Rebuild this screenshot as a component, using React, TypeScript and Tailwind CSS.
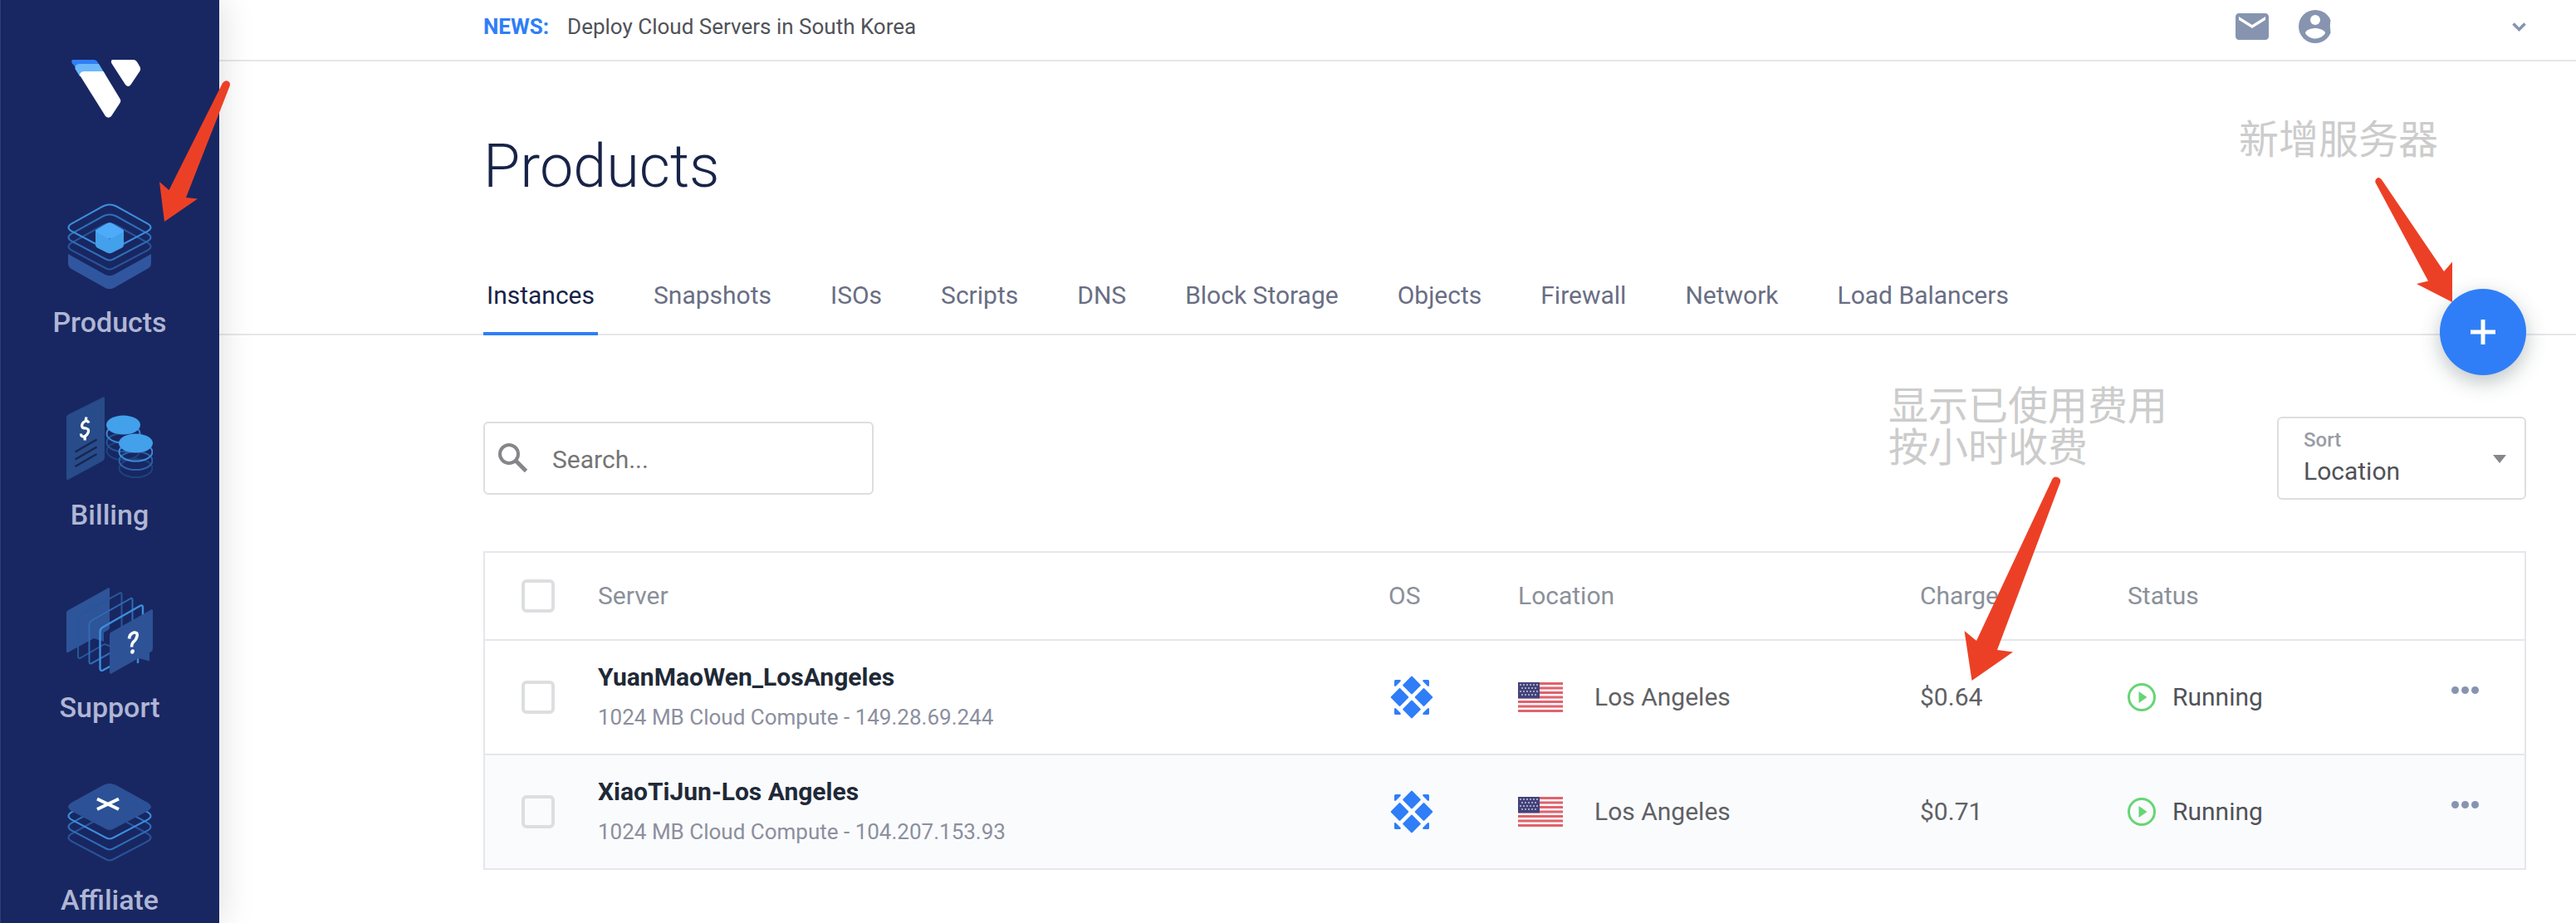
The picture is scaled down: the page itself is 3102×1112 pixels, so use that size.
import { type ReactNode } from "react";
import { MdEmail } from "react-icons/md";

const LAYER =
  "M44 4.5Q52 .5 60 4.5L98 25.5Q105 30 98 34.5L56 56.5Q52 58.5 48 56.5L6 34.5Q-1 30 6 25.5Z";

function Logo() {
  return (
    <svg viewBox="0 0 84 70" className="h-[70px] w-[84px]" role="img" aria-label="Vultr">
      <path d="M1 0H27Q29.500 0 31 2L40 17H12L1 4.500Q-.5 1.500 1 0Z" fill="#2f7ef7" />
      <path d="M9 5H33L42 20H10L4.500 11Q3.500 6 9 5Z" fill="#6cb8fb" />
      <path d="M15 14H38.500L58.500 47Q60 49.500 58.500 52L48 68Q44.500 71.500 41 68L10 18.500Q10 14.500 15 14Z" fill="#fff" />
      <path d="M49 0H75Q77.500 0 79 2.500L82.500 8.500Q84 11 82.500 13.500L71.500 30Q68.500 34 65 30L48.500 4.500Q47 1.500 49 0Z" fill="#fff" />
    </svg>
  );
}

function ProductsIcon() {
  return (
    <svg viewBox="0 0 104 104" className="size-[104px]" fill="none" strokeWidth="2" aria-hidden="true">
      <path d="M2 62L46 86.500Q52 90 58 86.500L102 62V73Q102 77 98 79.500L57 103Q52 105.500 47 103L6 80Q2 77.500 2 73Z" fill="#3056a0" />
      <path d={LAYER} transform="translate(0 23)" stroke="#29549a" />
      <path d={LAYER} transform="translate(0 12)" stroke="#2f6fb8" />
      <path d={LAYER} stroke="#3d8fdc" />
      <path d="M35 33L52 44L69 33V51Q69 53.500 67 54.500L55 60.500Q52 62 49 60.500L37 54.500Q35 53.500 35 51Z" fill="#43a0eb" />
      <path d="M37 32L48 25.500Q52 23 56 25.500L67 32Q70.500 34 67 36L56 42.500Q52 44.500 48 42.500L37 36Q33.500 34 37 32Z" fill="#4eabf9" />
    </svg>
  );
}

function BillingIcon() {
  return (
    <svg viewBox="0 0 104 104" className="size-[104px]" fill="none" strokeWidth="2" aria-hidden="true">
      <path d="M0 27Q0 25 2 23.500L44 2.500Q46 1.500 46 4V75Q46 78 43.500 79.500L2 102Q0 102.500 0 100Z" fill="#284b89" />
      <path d="M10.500 68.500L36.500 53.500M10.500 77.500L36.500 62.500M10.500 86L36.500 71" stroke="#152650" strokeWidth="2.200" />
      <path d="M27 33.500Q25.500 29.500 21.500 32Q17.500 35 19 38.500Q20 40 23.500 40Q27 40.500 26.500 44Q25 49 21 50Q17.500 50.500 17.500 46.500M24 26.500L23 31M22.500 50L22 54.500" stroke="#fff" strokeWidth="3.200" />
      <ellipse cx="68.500" cy="67" rx="20" ry="11" stroke="#1f427f" />
      <ellipse cx="68.500" cy="57" rx="20" ry="11" stroke="#255596" />
      <ellipse cx="68.500" cy="46.500" rx="20" ry="11" stroke="#3a86cf" />
      <ellipse cx="68.500" cy="36" rx="20.500" ry="11.500" fill="#43a0eb" />
      <ellipse cx="83.500" cy="88" rx="20" ry="11" stroke="#1f427f" />
      <ellipse cx="83.500" cy="79" rx="20" ry="11" stroke="#2b63a9" />
      <ellipse cx="83.500" cy="68.500" rx="20" ry="11" stroke="#3d8fdc" />
      <ellipse cx="83.500" cy="58" rx="20.500" ry="11.500" fill="#43a0eb" />
    </svg>
  );
}

function SupportIcon() {
  return (
    <svg viewBox="0 0 104 104" className="size-[104px]" fill="none" strokeWidth="2" aria-hidden="true">
      <path d="M0 30Q0 28.500 1.500 27.500L50 .5Q52 -.5 52 1.500V48Q52 50 50 51L45 54V65L33 61L2 78Q0 78.500 0 77Z" fill="#2e5499" />
      <path d="M66.500 56V8Q66.500 5 63.500 7L17 32.500Q14 34.500 14 38V83Q14 86 17 84.500L46 68L54 71" stroke="#28569a" />
      <path d="M79.500 40V15Q79.500 11.500 76.500 13.500L30.500 39.500Q27.500 41.500 27.500 45V89Q27.500 92.500 30.500 91L54 78" stroke="#2f6bb3" />
      <path d="M92 34V24Q92 20 88.500 22L44 47.500Q40.500 49.500 40.500 53V97Q40.500 101 44 99.500L54 94M86 91V84" stroke="#3d8fdc" strokeWidth="2.400" />
      <path d="M52 57Q52 54.500 54 53.500L102 26.500Q104 25.500 104 27.500V73Q104 76 102 77L100 78.500V88.500L87 85L54 103.500Q52 104.500 52 102Z" fill="#2e5296" />
      <path d="M75.500 61.500Q76 55.500 81.500 54Q86 53.500 85 58.500Q84 63 80.500 65.500Q78.500 67.500 78.500 71.500" stroke="#fff" strokeWidth="3.600" />
      <ellipse cx="79.500" cy="77" rx="2.300" ry="2.800" transform="rotate(25 79.500 77)" fill="#fff" />
    </svg>
  );
}

function AffiliateIcon() {
  return (
    <svg viewBox="0 0 104 104" className="size-[104px]" fill="none" strokeWidth="2" aria-hidden="true">
      <path d={LAYER} transform="translate(0 39)" stroke="#29549a" />
      <path d={LAYER} transform="translate(0 26)" stroke="#2f6fb8" />
      <path d={LAYER} transform="translate(0 13)" stroke="#3d8fdc" />
      <path d={LAYER} transform="translate(0 2)" stroke="#2c5196" strokeWidth="1" fill="#2c5196" />
      <path d="M37 22.500L63 35M37 35L63 22.500" stroke="#fff" strokeWidth="4" />
    </svg>
  );
}

function OsIcon() {
  return (
    <svg viewBox="0 0 52 52" className="size-[52px]" fill="#2f7ef7" role="img" aria-label="CentOS">
      {[[26, 11.5], [11.5, 26], [40.5, 26], [26, 40.5]].map(([x, y]) => (
        <rect key={`${x}-${y}`} x={x - 8} y={y - 8} width="16" height="16" rx="1.200" transform={`rotate(45 ${x} ${y})`} />
      ))}
      {[0, 90, 180, 270].map((angle) => (
        <path key={angle} d="M6.500 5H12Q13.500 5.500 12.500 7L7 12.500Q5.500 13.500 5 12V6.500Q5 5 6.500 5Z" transform={`rotate(${angle} 26 26)`} />
      ))}
    </svg>
  );
}

function UsFlag() {
  return (
    <svg viewBox="0 0 54 36" className="h-9 w-[54px] shrink-0" role="img" aria-label="United States">
      <rect width="54" height="36" fill="#f8f8fe" />
      {[0, 1, 2, 3, 4, 5, 6].map((i) => (
        <rect key={i} y={i * 5.5} width="54" height="3" fill="#e0626b" />
      ))}
      <rect width="26" height="19.400" fill="#42427a" />
      {[0, 1, 2, 3].map((row) =>
        Array.from({ length: row % 2 ? 5 : 6 }, (_, col) => (
          <rect key={`${row}-${col}`} x={2 + col * 4 + (row % 2) * 2} y={2 + row * 4} width="2" height="2" fill="#a5a5c0" />
        )),
      )}
    </svg>
  );
}

const navItems: { label: string; icon: ReactNode }[] = [
  { label: "Products", icon: <ProductsIcon /> },
  { label: "Billing", icon: <BillingIcon /> },
  { label: "Support", icon: <SupportIcon /> },
  { label: "Affiliate", icon: <AffiliateIcon /> },
];

const tabs = ["Instances", "Snapshots", "ISOs", "Scripts", "DNS", "Block Storage", "Objects", "Firewall", "Network", "Load Balancers"];

const servers = [
  { name: "YuanMaoWen_LosAngeles", ip: "149.28.69.244", charge: "$0.64" },
  { name: "XiaoTiJun-Los Angeles", ip: "104.207.153.93", charge: "$0.71" },
];

function Checkbox({ label }: { label: string }) {
  return (
    <input
      type="checkbox"
      aria-label={label}
      className="block size-10 appearance-none rounded-md border-4 border-[#dddee0] checked:bg-[#2f7ef7]"
    />
  );
}

function Sidebar() {
  return (
    <aside className="relative z-10 flex w-[264px] shrink-0 flex-col items-center bg-[#182762] pt-[72px] shadow-[inset_1px_0_0_#2f3d73,0_0_40px_rgba(0,0,0,0.15)]">
      <a href="#home" className="mr-2">
        <Logo />
      </a>
      <nav className="mt-[102px] flex flex-col gap-[68px]">
        {navItems.map((item) => (
          <a key={item.label} href={`#${item.label.toLowerCase()}`} className="flex flex-col items-center gap-5">
            {item.icon}
            <span className="text-[34px] leading-10 font-medium text-[#b0b6d4]">{item.label}</span>
          </a>
        ))}
      </nav>
    </aside>
  );
}

function TopBar() {
  return (
    <header className="flex h-[74px] items-center justify-between border-b-2 border-[#e6e6eb] pr-[60px] pb-2 pl-[318px]">
      <p className="flex gap-[22px] text-[26px] leading-10">
        <strong className="font-bold text-[#2f7ef7]">NEWS:</strong>
        <a href="#news" className="text-[#505259]">Deploy Cloud Servers in South Korea</a>
      </p>
      <div className="flex items-center text-[#8794b0]">
        <button type="button" aria-label="Messages">
          <MdEmail size={48} />
        </button>
        <button type="button" aria-label="Account" className="ml-7 flex items-center">
          <svg viewBox="0 0 48 48" className="size-12" aria-hidden="true">
            <circle cx="24" cy="24" r="20" fill="currentColor" />
            <circle cx="24" cy="16" r="6" fill="#fff" />
            <path d="M12 32C12 28 20 26 24 26S36 28 36 32C33.500 36 29 38.500 24 38.500S14.500 36 12 32Z" fill="#fff" />
            <path d="M48 12L42.500 16Q41 23 42.500 31L48 36Z" fill="#fff" />
          </svg>
          <svg viewBox="0 0 18 12" className="ml-[212px] h-3 w-[18px]" fill="none" stroke="currentColor" strokeWidth="3.500" aria-hidden="true">
            <path d="M2.500 2.500L9.500 9.500L16.500 2.500" />
          </svg>
        </button>
      </div>
    </header>
  );
}

function Tabs() {
  return (
    <div className="relative pr-[60px] pl-[318px] shadow-[inset_0_-2px_0_#e6e6eb]">
      <nav className="flex gap-[63px]">
        {tabs.map((tab, i) => (
          <a
            key={tab}
            href={`#${tab.toLowerCase().replace(" ", "-")}`}
            aria-current={i === 0 ? "page" : undefined}
            className={
              i === 0
                ? "border-b-4 border-[#2f7ef7] px-1 pb-6 text-[30px] leading-10 text-[#172348]"
                : "px-1 pb-7 text-[30px] leading-10 text-[#696e84]"
            }
          >
            {tab}
          </a>
        ))}
      </nav>
      <button
        type="button"
        aria-label="Deploy new server"
        className="absolute right-[60px] -bottom-12 flex size-[104px] items-center justify-center rounded-full bg-[#2f7ef7] shadow-[0_8px_24px_rgba(40,60,60,0.3)]"
      >
        <svg viewBox="0 0 30 30" className="size-[30px]" stroke="#fff" strokeWidth="5" aria-hidden="true">
          <path d="M15 0V30M0 15H30" />
        </svg>
      </button>
    </div>
  );
}

function Toolbar() {
  return (
    <div className="flex items-center justify-between">
      <label className="flex h-[88px] w-[470px] items-center rounded-md border-2 border-[#dddee0]">
        <svg viewBox="0 0 36 36" className="ml-4 size-9 shrink-0" fill="none" stroke="#85868a" strokeWidth="4" aria-hidden="true">
          <circle cx="13" cy="13" r="11" />
          <path d="M21 21L33.500 33.500" strokeWidth="5" />
        </svg>
        <input
          type="search"
          aria-label="Search"
          placeholder="Search..."
          className="ml-[29px] min-w-0 flex-1 pt-1 text-[30px] leading-10 text-[#505259] outline-none placeholder:text-[#757575]"
        />
      </label>
      <div className="relative h-[100px] w-[300px] rounded-md border-2 border-[#dddee0]">
        <label htmlFor="sort" className="absolute top-2.5 left-[30px] text-[24px] leading-8 font-medium text-[#999da6]">
          Sort
        </label>
        <select
          id="sort"
          defaultValue="Location"
          className="size-full appearance-none pt-8 pl-[30px] text-[30px] leading-10 text-[#505259] outline-none"
        >
          <option>Location</option>
          <option>Server</option>
          <option>Charges</option>
        </select>
        <svg viewBox="0 0 16 10" className="pointer-events-none absolute top-11 right-[22px] h-2.5 w-4" fill="#86878b" aria-hidden="true">
          <path d="M0 0H16L8 10Z" />
        </svg>
      </div>
    </div>
  );
}

function ServerTable() {
  return (
    <table className="mt-[62px] w-full table-fixed border-separate border-spacing-0 border-2 border-[#e6e6eb] text-left text-[30px] leading-10">
      <colgroup>
        <col className="w-[136px]" />
        <col />
        <col className="w-[156px]" />
        <col className="w-[484px]" />
        <col className="w-[250px]" />
        <col className="w-[358px]" />
        <col className="w-[120px]" />
      </colgroup>
      <thead className="text-[#8b909a] [&_th]:h-[106px] [&_th]:border-b-2 [&_th]:border-[#e6e6eb] [&_th]:font-normal">
        <tr>
          <th className="pl-11">
            <Checkbox label="Select all servers" />
          </th>
          <th scope="col">Server</th>
          <th scope="col">OS</th>
          <th scope="col">Location</th>
          <th scope="col">Charges</th>
          <th scope="col">Status</th>
          <th aria-label="Actions" />
        </tr>
      </thead>
      <tbody className="text-[#606164]">
        {servers.map((server, i) => (
          <tr
            key={server.name}
            className={
              i === 0
                ? "[&>td]:h-[138px] [&>td]:border-b-2 [&>td]:border-[#e6e6eb]"
                : "bg-[#fafbfd] [&>td]:h-[136px]"
            }
          >
            <td className="pl-11">
              <Checkbox label={`Select ${server.name}`} />
            </td>
            <td>
              <a href="#server" className="block leading-[48px] font-bold text-[#1f2937]">{server.name}</a>
              <span className="block text-[26px] leading-[48px] text-[#8c8f9e]">1024 MB Cloud Compute - {server.ip}</span>
            </td>
            <td className="pl-0.5">
              <OsIcon />
            </td>
            <td>
              <div className="flex items-center gap-[38px]">
                <UsFlag />
                Los Angeles
              </div>
            </td>
            <td>{server.charge}</td>
            <td>
              <div className="flex items-center gap-5 text-[#505259]">
                <svg viewBox="0 0 34 34" className="size-[34px]" fill="none" aria-hidden="true">
                  <circle cx="17" cy="17" r="15.500" stroke="#66d574" strokeWidth="3" />
                  <path d="M13.500 10L23.500 17L13.500 24Z" fill="#66d574" />
                </svg>
                Running
              </div>
            </td>
            <td className="pb-[18px] pl-8">
              <button type="button" aria-label={`Actions for ${server.name}`} className="flex h-6 items-center gap-[3px]">
                <span className="size-[9px] rounded-full bg-[#8794b0]" />
                <span className="size-[9px] rounded-full bg-[#8794b0]" />
                <span className="size-[9px] rounded-full bg-[#8794b0]" />
              </button>
            </td>
          </tr>
        ))}
      </tbody>
    </table>
  );
}

function Annotations() {
  return (
    <>
      <svg viewBox="0 0 96 176" className="pointer-events-none absolute top-[94px] left-[188px] z-20 h-44 w-24" fill="#ec4026" aria-hidden="true">
        <path d="M80 6Q83 2 87 4Q90 6 88.500 10L36 144L50 145.500L10 173L4 125L15.500 135Z" />
      </svg>
      <p className="pointer-events-none absolute top-36 right-[166px] z-20 text-[48px] leading-[50px] text-[#ccc]">新增服务器</p>
      <svg viewBox="0 0 100 154" className="pointer-events-none absolute top-[212px] right-[147px] z-20 h-[154px] w-[100px]" fill="#ec4026" aria-hidden="true">
        <path d="M5.500 8Q4.500 4 8.500 2Q11 1.500 13 4.500L88 115L98 103.500V152L55 130L69 126.500Z" />
      </svg>
      <p className="pointer-events-none absolute top-[465px] right-[492px] z-20 text-[48px] leading-[50px] text-[#ccc]">
        显示已使用费用
        <br />
        按小时收费
      </p>
      <svg viewBox="0 0 126 252" className="pointer-events-none absolute top-[570px] right-[616px] z-20 h-[252px] w-[126px]" fill="#ec4026" aria-hidden="true">
        <path d="M111 8Q113 3 118 5Q122 7 121 11L45 213L64 215.500L14.500 250L5.500 190L20 202Z" />
      </svg>
    </>
  );
}

export default function App() {
  return (
    <div className="relative flex min-h-screen w-full overflow-hidden bg-white font-[Roboto,'Noto_Sans_CJK_SC',sans-serif]">
      <Sidebar />
      <main className="min-w-0 flex-1">
        <TopBar />
        <h1 className="pt-[91px] pb-[99px] pl-[318px] text-[72px] leading-[72px] font-light text-[#172348]">Products</h1>
        <Tabs />
        <section className="pt-[98px] pr-[60px] pl-[318px]">
          <Toolbar />
          <ServerTable />
        </section>
      </main>
      <Annotations />
    </div>
  );
}
